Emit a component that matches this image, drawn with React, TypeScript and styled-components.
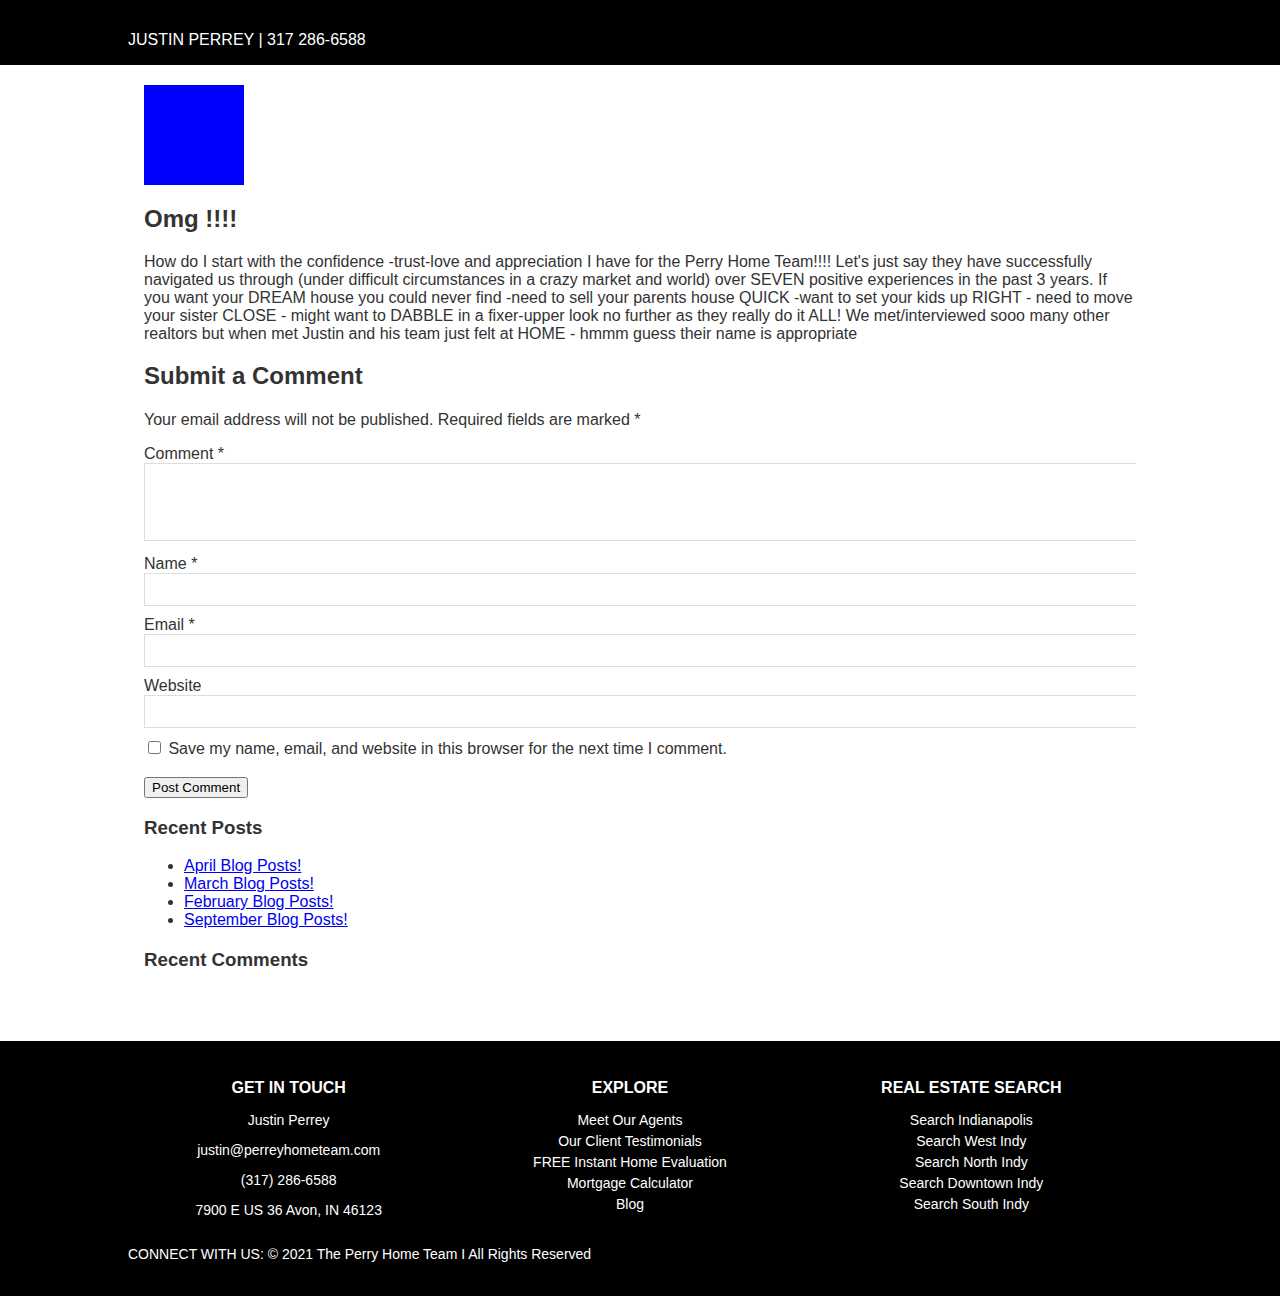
import React from "react";
import styled, { createGlobalStyle } from "styled-components";

const Global = createGlobalStyle`
  html, body { margin: 0; padding: 0; background: #fff; }
  body { font-family: "Liberation Sans", Arial, sans-serif; color: #333; }
`;

const TopBar = styled.header`
  background: #000;
  color: #fff;
  padding: 31px 0 16px;
`;

const Wrap = styled.div`
  width: 1024px;
  margin: 0 auto;
`;

const Brand = styled.div`
  font-size: 16px;
  line-height: 18px;
`;

const Main = styled.main`
  width: 992px;
  margin: 0 auto;
  padding: 20px 0 52px;
  overflow: hidden;
`;

const Thumb = styled.div`
  width: 100px;
  height: 100px;
  background: #0000ff;
`;

const Title = styled.h2<{ $top: number; $bottom: number }>`
  font-size: 24px;
  font-weight: bold;
  line-height: 27px;
  margin: ${(p) => p.$top}px 0 ${(p) => p.$bottom}px;
  color: #333;
`;

const Text = styled.p`
  font-size: 16px;
  line-height: 18px;
  margin: 0 0 15px;
`;

const Field = styled.div<{ $gap: number }>`
  margin-bottom: ${(p) => p.$gap}px;
`;

const Label = styled.label`
  display: block;
  font-size: 16px;
  line-height: 19px;
`;

const Area = styled.textarea`
  display: block;
  box-sizing: content-box;
  width: 100%;
  height: 76px;
  padding: 0 8px;
  margin: 0;
  border: 1px solid #ddd;
  resize: none;
  font: inherit;
`;

const Input = styled.input`
  display: block;
  box-sizing: content-box;
  width: 100%;
  height: 31px;
  padding: 0 8px;
  margin: 0;
  border: 1px solid #ddd;
  font: inherit;
`;

const CheckRow = styled.p`
  font-size: 16px;
  line-height: 18px;
  margin: 10px 0 19px;
`;

const Check = styled.input`
  margin: 3px 3px 3px 4px;
  vertical-align: 0;
`;

const Submit = styled.button`
  font-family: "Liberation Sans", Arial, sans-serif;
  font-size: 13.33px;
  display: block;
  margin: 0;
`;

const SideTitle = styled.h3<{ $top: number }>`
  font-size: 18.72px;
  font-weight: bold;
  line-height: 21px;
  margin: ${(p) => p.$top}px 0 19px;
  color: #333;
`;

const PostList = styled.ul`
  margin: 0 0 16px;
  padding-left: 40px;
  font-size: 16px;
  line-height: 18px;
`;

const PostLink = styled.a`
  color: #0000ee;
  text-decoration: underline;
`;

const Foot = styled.footer`
  background: #000;
  color: #fff;
  padding: 38px 0 32px;
  font-size: 14px;
`;

const Cols = styled.div`
  display: grid;
  grid-template-columns: repeat(3, 1fr);
`;

const Col = styled.div`
  padding-right: 20px;
  text-align: center;
`;

const ColTitle = styled.h4`
  margin: 0 0 13px;
  font-size: 16px;
  line-height: 18px;
  font-weight: bold;
`;

const ContactLine = styled.p`
  margin: 0 0 9px;
  line-height: 21px;
  &:last-child { margin-bottom: 0; }
`;

const LinkLine = styled.div`
  line-height: 21px;
`;

const Copy = styled.div`
  margin-top: 23px;
  line-height: 21px;
`;

const posts = ["April Blog Posts!", "March Blog Posts!", "February Blog Posts!", "September Blog Posts!"];
const explore = ["Meet Our Agents", "Our Client Testimonials", "FREE Instant Home Evaluation", "Mortgage Calculator", "Blog"];
const search = ["Search Indianapolis", "Search West Indy", "Search North Indy", "Search Downtown Indy", "Search South Indy"];

export default function App() {
  return (
    <>
      <Global />
      <TopBar>
        <Wrap>
          <Brand>JUSTIN PERREY | 317 286-6588</Brand>
        </Wrap>
      </TopBar>
      <Main>
        <Thumb />
        <Title $top={20} $bottom={21}>Omg !!!!</Title>
        <Text>
          How do I start with the confidence -trust-love and appreciation I have for the Perry Home Team!!!! Let's just say they have successfully navigated us through (under difficult circumstances in a crazy market and world) over SEVEN positive experiences in the past 3 years. If you want your DREAM house you could never find -need to sell your parents house QUICK -want to set your kids up RIGHT - need to move your sister CLOSE - might want to DABBLE in a fixer-upper look no further as they really do it ALL! We met/interviewed sooo many other realtors but when met Justin and his team just felt at HOME - hmmm guess their name is appropriate
        </Text>
        <Title $top={19} $bottom={22}>Submit a Comment</Title>
        <Text>Your email address will not be published. Required fields are marked *</Text>
        <Field $gap={13}>
          <Label>Comment *</Label>
          <Area />
        </Field>
        <Field $gap={9}>
          <Label>Name *</Label>
          <Input type="text" />
        </Field>
        <Field $gap={9}>
          <Label>Email *</Label>
          <Input type="text" />
        </Field>
        <Field $gap={0}>
          <Label>Website</Label>
          <Input type="text" />
        </Field>
        <CheckRow>
          <Check type="checkbox" /> Save my name, email, and website in this browser for the next time I comment.
        </CheckRow>
        <Submit>Post Comment</Submit>
        <SideTitle $top={19}>Recent Posts</SideTitle>
        <PostList>
          {posts.map((p) => (
            <li key={p}>
              <PostLink href="#">{p}</PostLink>
            </li>
          ))}
        </PostList>
        <SideTitle $top={20}>Recent Comments</SideTitle>
      </Main>
      <Foot>
        <Wrap>
          <Cols>
            <Col>
              <ColTitle>GET IN TOUCH</ColTitle>
              <ContactLine>Justin Perrey</ContactLine>
              <ContactLine>justin@perreyhometeam.com</ContactLine>
              <ContactLine>(317) 286-6588</ContactLine>
              <ContactLine>7900 E US 36 Avon, IN 46123</ContactLine>
            </Col>
            <Col>
              <ColTitle>EXPLORE</ColTitle>
              {explore.map((e) => (
                <LinkLine key={e}>{e}</LinkLine>
              ))}
            </Col>
            <Col>
              <ColTitle>REAL ESTATE SEARCH</ColTitle>
              {search.map((e) => (
                <LinkLine key={e}>{e}</LinkLine>
              ))}
            </Col>
          </Cols>
          <Copy>CONNECT WITH US: © 2021 The Perry Home Team I All Rights Reserved</Copy>
        </Wrap>
      </Foot>
    </>
  );
}
